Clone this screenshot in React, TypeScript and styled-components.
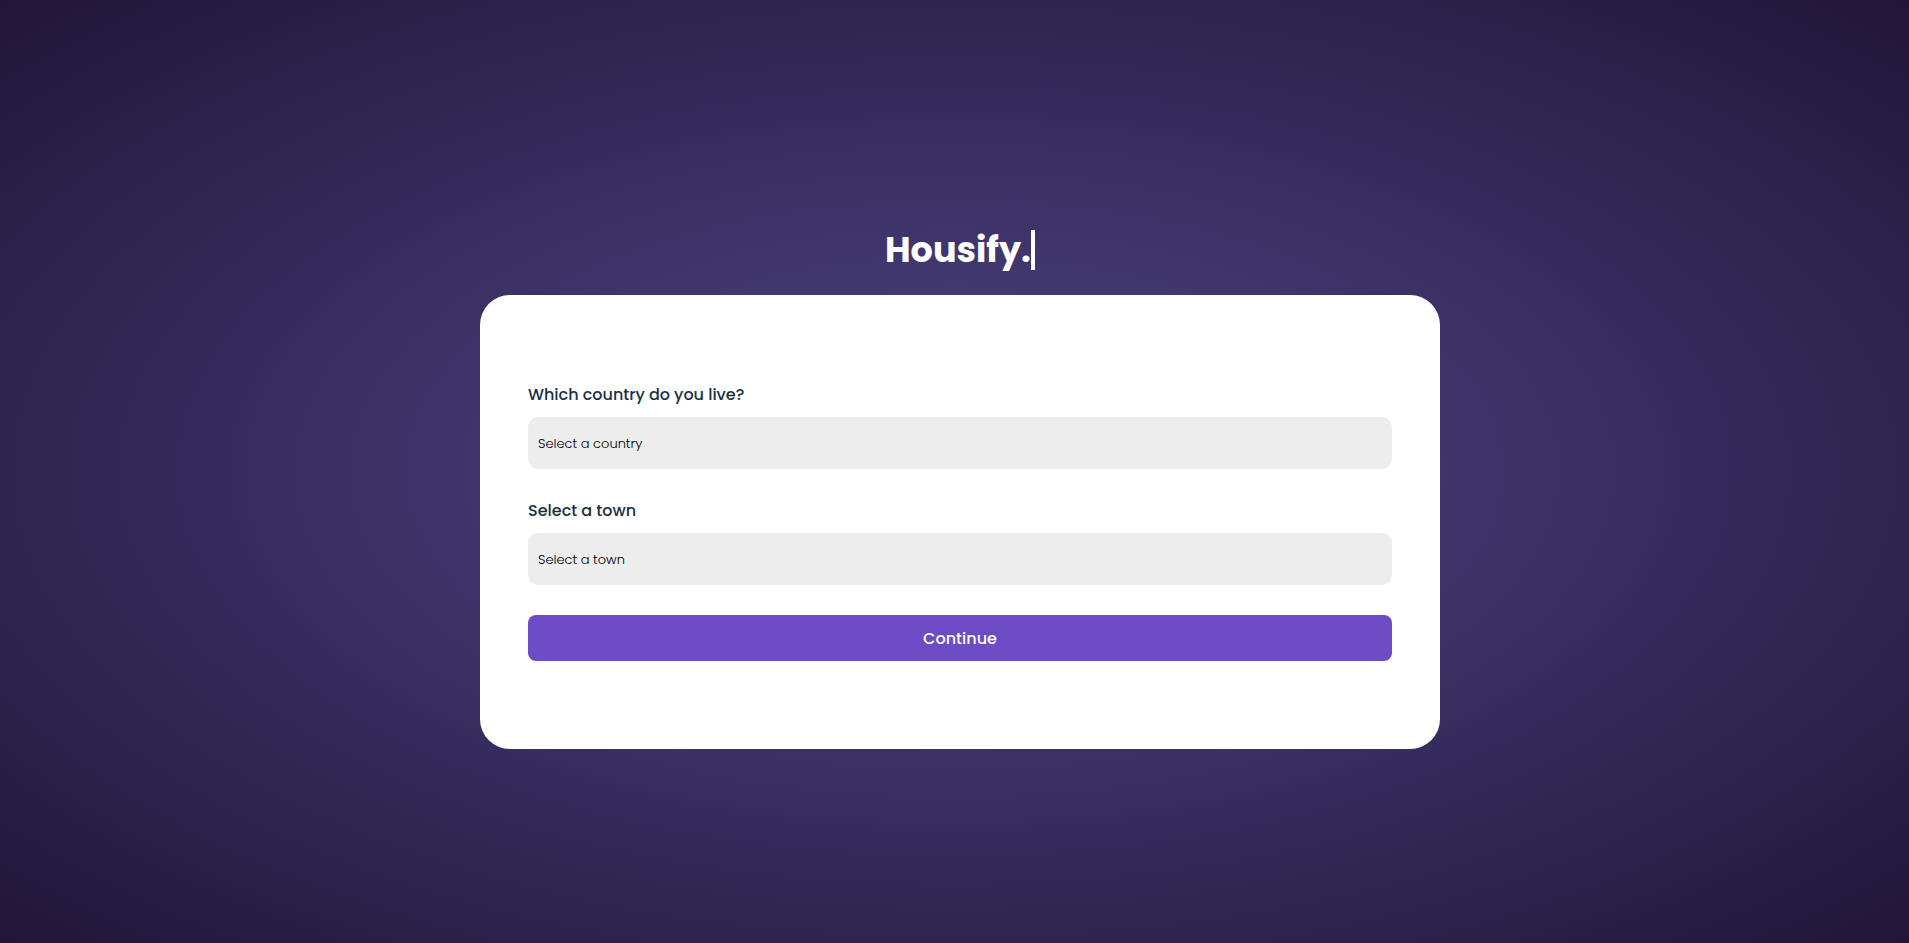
import React, { useState } from "react";
import styled, { createGlobalStyle } from "styled-components";

const GlobalStyle = createGlobalStyle`
  *, *::before, *::after {
    box-sizing: border-box;
  }
  body {
    margin: 0;
    font-family: Poppins, Inter, "Liberation Sans", sans-serif;
    background: #221637;
  }
`;

const Page = styled.main`
  min-height: 100vh;
  padding: 36px 0 0 11px;
  display: flex;
  flex-direction: column;
  align-items: center;
  justify-content: center;
  gap: 25px;
  background: radial-gradient(ellipse at center, #4f4687 0%, #211638 100%);
`;

const Brand = styled.h1`
  margin: 0;
  height: 40px;
  border-right: 4px solid #ffffff;
  color: #ffffff;
  font-size: 35px;
  font-weight: 700;
  line-height: 40px;
  white-space: nowrap;
`;

const Card = styled.form`
  width: 960px;
  max-width: 100%;
  padding: 88px 48px;
  display: flex;
  flex-direction: column;
  gap: 30px;
  border-radius: 30px;
  background: #ffffff;
`;

const Field = styled.div`
  display: flex;
  flex-direction: column;
  gap: 10px;
`;

const Label = styled.label`
  color: #1a3042;
  font-size: 16px;
  font-weight: 500;
  line-height: 24px;
`;

const Select = styled.select`
  appearance: none;
  width: 100%;
  height: 52px;
  padding: 0 10px;
  border: 0;
  border-radius: 10px;
  background: #ededed;
  color: #000000;
  font-family: inherit;
  font-size: 13px;
  font-weight: 300;
`;

const Submit = styled.button`
  height: 46px;
  border: 0;
  border-radius: 8px;
  background: #6c4bc5;
  color: #ffffff;
  font-family: inherit;
  font-size: 16px;
  font-weight: 500;
  cursor: pointer;
`;

export default function App() {
  const [country, setCountry] = useState("");
  const [town, setTown] = useState("");

  return (
    <>
      <GlobalStyle />
      <Page>
        <Brand>Housify.</Brand>
        <Card onSubmit={(e) => e.preventDefault()}>
          <Field>
            <Label htmlFor="country">Which country do you live?</Label>
            <Select id="country" value={country} onChange={(e) => setCountry(e.target.value)}>
              <option value="">Select a country</option>
            </Select>
          </Field>
          <Field>
            <Label htmlFor="town">Select a town</Label>
            <Select id="town" value={town} onChange={(e) => setTown(e.target.value)}>
              <option value="">Select a town</option>
            </Select>
          </Field>
          <Submit type="submit">Continue</Submit>
        </Card>
      </Page>
    </>
  );
}
